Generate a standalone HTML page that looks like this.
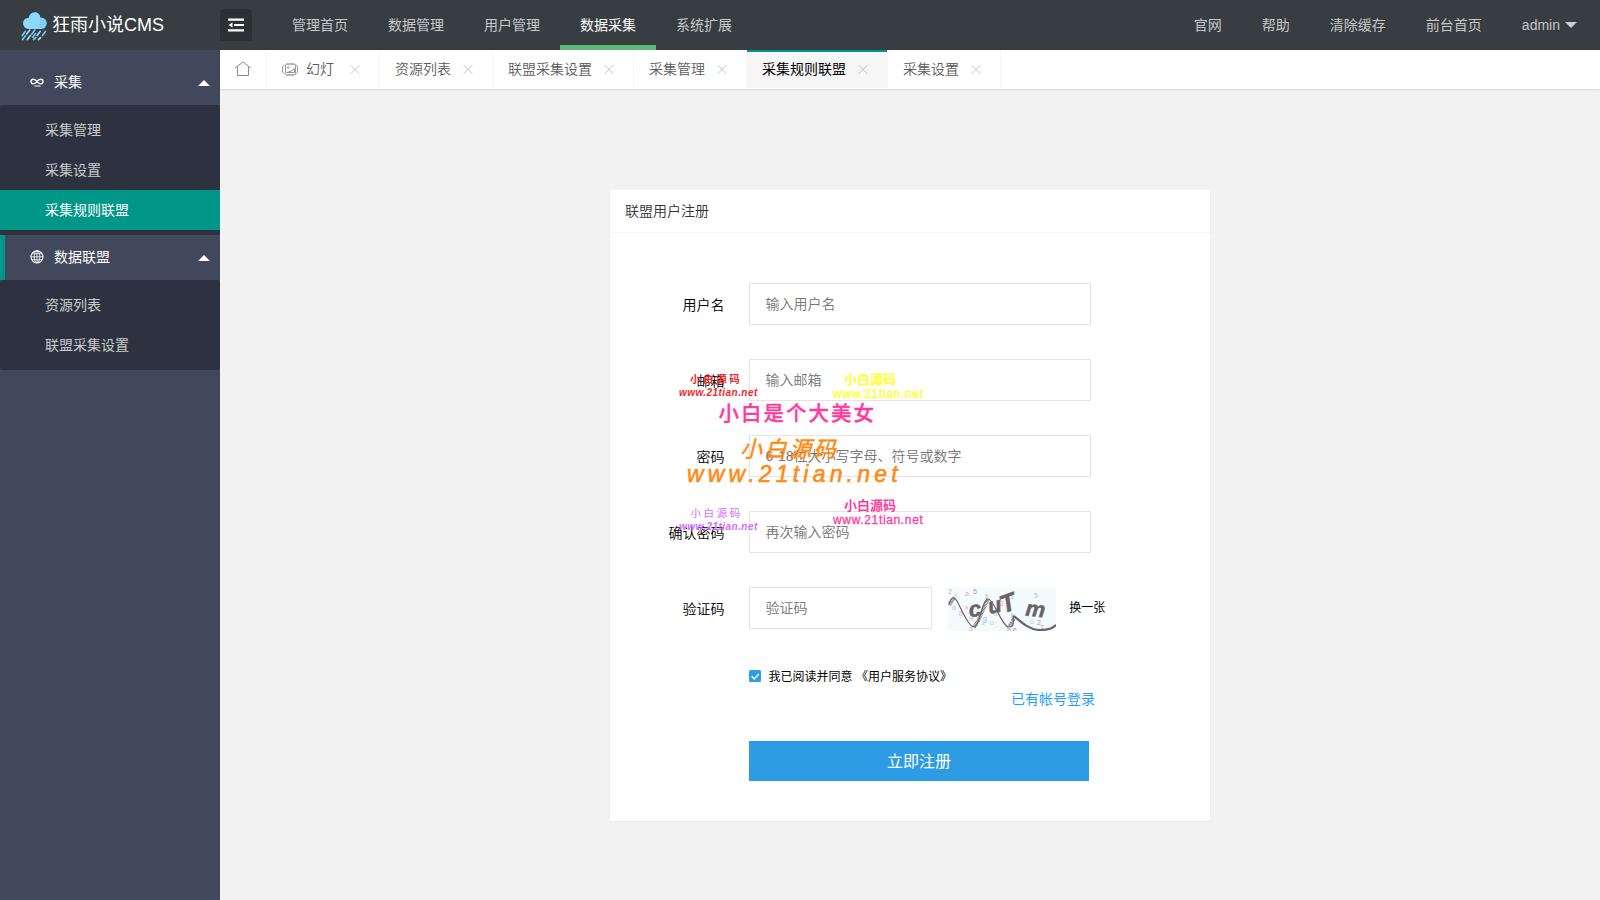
<!DOCTYPE html>
<html lang="zh-CN">
<head>
<meta charset="utf-8">
<title>狂雨小说CMS</title>
<style>
*{box-sizing:border-box;margin:0;padding:0}
html,body{width:1600px;height:900px;overflow:hidden}
body{font-family:"Liberation Sans","Noto Sans CJK SC",sans-serif;font-size:14px;color:#333;background:#f2f2f2;position:relative}
a{text-decoration:none;color:inherit}
ul{list-style:none}
/* header */
.header{position:absolute;left:0;top:0;width:1600px;height:50px;background:#373d41;z-index:10}
.logo{position:absolute;left:0;top:0;width:220px;height:50px}
.logo svg{position:absolute;left:15px;top:5px}
.logo span{position:absolute;left:52px;top:0;line-height:51px;font-size:18px;color:#fff;white-space:nowrap}
.flex{position:absolute;left:220px;top:9px;width:32px;height:32px;border-radius:3px;background:#2c3134}
.flex svg{position:absolute;left:8px;top:8px}
.nav{position:absolute;top:0;height:50px}
.nav li{float:left;height:50px;line-height:50px;padding:0 20px;color:rgba(255,255,255,.72);font-size:14px;position:relative;white-space:nowrap}
.nav li.on{color:#fff}
.nav li.on:after{content:"";position:absolute;left:0;right:0;bottom:0;height:5px;background:#5fb878}
.nav-l{left:272px}
.nav-r{right:0}
.caret{display:inline-block;width:0;height:0;border:6px solid transparent;border-top-color:rgba(255,255,255,.75);border-bottom-width:0;vertical-align:middle;margin-left:5px;margin-top:-2px}
/* side */
.side{position:absolute;left:0;top:50px;width:220px;height:850px;background:#42485b;color:#fff}
.side{padding-top:10px}
.side .t{height:45px;line-height:45px;position:relative;color:#fff;font-size:14px;padding-left:54px}
.side .t2{border-left:5px solid #009688;padding-left:49px}
.side .t svg{position:absolute}
.side .t:after{content:"";position:absolute;right:10px;top:50%;margin-top:-3px;border:6px solid transparent;border-bottom-color:#fff;border-top-width:0}
.side .sub{background:#2e3240;padding:5px 0;border-radius:2px}
.side .sub li{height:40px;line-height:40px;padding-left:45px;color:rgba(255,255,255,.75);font-size:14px}
.side .sub li.on{background:#009688;color:#fff}
/* tabs */
.tabs{position:absolute;left:220px;top:50px;width:1380px;height:39px;background:#fff;box-shadow:0 1px 2px 0 rgba(0,0,0,.1)}
.tabs li{float:left;height:38px;line-height:39px;border-right:1px solid #f6f6f6;padding:0 15px;color:#5c5c5c;font-size:14px;position:relative;white-space:nowrap}
.tabs li.home{width:47px;padding:0}
.tabs li.on{background:#f6f6f6;color:#000}
.tabs li.on:before{content:"";position:absolute;left:0;right:0;top:0;height:2px;background:#009688}
.tabs .x{display:inline-block;width:18px;height:18px;margin-left:8px;vertical-align:middle;position:relative;top:-1px}
.tabs .x svg{display:block}
/* card */
.card{position:absolute;left:610px;top:190px;width:600px;height:631px;background:#fff;border-radius:2px;box-shadow:0 1px 2px 0 rgba(0,0,0,.05)}
.card h3{height:43px;line-height:42px;padding-left:15px;font-size:14px;font-weight:normal;color:#333;border-bottom:1px solid #f6f6f6}
.lab{position:absolute;width:114.500px;text-align:right;font-size:14px;color:#000;line-height:44px;left:0}
.inp{position:absolute;left:139px;width:342px;height:42px;border:1px solid #e5e5e5;border-radius:0;background:#fff;line-height:40px;padding-left:15.500px;font-size:14px;color:#757575;white-space:nowrap}
.btn{position:absolute;left:139px;top:551px;width:340px;height:40px;background:#2e9ce5;color:#fff;font-size:16px;text-align:center;line-height:42px}
.tabs li,.card h3,.lab,.inp{font-weight:350}
.tabs li.on{font-weight:400}
.wm{position:absolute;white-space:nowrap;line-height:1;font-family:"Liberation Sans","Noto Sans CJK SC",sans-serif}
</style>
</head>
<body>
<div class="header">
  <div class="logo">
    <svg width="50" height="40" viewBox="0 0 50 40"><circle cx="19.600" cy="13.100" r="5.800" fill="#8dd8fd"/><circle cx="13.600" cy="18.300" r="5.600" fill="#8dd8fd"/><rect x="13" y="14" width="13" height="10" fill="#8dd8fd"/><circle cx="26" cy="18.300" r="5.800" fill="#78d0fc"/><path d="M19.600 7.300a5.800 5.800 0 0 1 5.700 6.800L24 24H19z" fill="#8dd8fd"/><g stroke-width="1.700" stroke-linecap="round" fill="none"><path d="M10.300 26.400l-3 4.100M19.800 25l-3 4.100M30.500 26.400l-3 4.100M10.500 30.800l-3 3.800M20.500 28.600l-2.900 3.800M20.700 32.600l-2 2.100" stroke="#6ccbf8"/><path d="M14.700 25.200l-3 3.900M25.100 26.400l-3 4.100M15.400 30.400l-3 4.100M25.500 32.600l-2 2.100" stroke="#a4dcf7"/></g></svg>
    <span>狂雨小说CMS</span>
  </div>
  <div class="flex"><svg width="16" height="16" viewBox="0 0 16 16"><path d="M0 1.5h16v2.2H0zM6 6.9h10v2.2H6zM0 12.3h16v2.2H0zM4.5 5.5v5L0.5 8z" fill="#fff"/></svg></div>
  <ul class="nav nav-l">
    <li>管理首页</li><li>数据管理</li><li>用户管理</li><li class="on">数据采集</li><li>系统扩展</li>
  </ul>
  <ul class="nav nav-r">
    <li>官网</li><li>帮助</li><li>清除缓存</li><li>前台首页</li><li style="padding-right:23px">admin<i class="caret"></i></li>
  </ul>
</div>

<div class="side">
  <div class="t"><svg style="left:30px;top:17px" width="14" height="10" viewBox="0 0 14 10"><path d="M1 4.5c0-3 4-3 6 0s6 3 6 0-4-3-6 0-6 3-6 0z" fill="none" stroke="#fff" stroke-width="1.350"/><path d="M4.500 9h6" stroke="#fff" stroke-width="1"/></svg>采集</div>
  <ul class="sub">
    <li>采集管理</li><li>采集设置</li><li class="on">采集规则联盟</li>
  </ul>
  <div class="t t2"><svg style="left:25px;top:15px" width="14" height="14" viewBox="0 0 14 14"><circle cx="7" cy="6.800" r="6" fill="none" stroke="#fff" stroke-width="1.150"/><ellipse cx="7" cy="6.800" rx="2.800" ry="6" fill="none" stroke="#fff" stroke-width=".8"/><path d="M1 6.800h12M2 3.800h10M2 9.800h10M7 .8v12" stroke="#fff" stroke-width=".8"/></svg>数据联盟</div>
  <ul class="sub">
    <li>资源列表</li><li>联盟采集设置</li>
  </ul>
</div>

<ul class="tabs">
  <li class="home"><svg style="position:absolute;left:15px;top:11px" width="16" height="16" viewBox="0 0 16 16"><path d="M0.300 6.900L8 0.900l7.700 6M2.500 6v8.500h11V6" fill="none" stroke="#8a8a8a" stroke-width="1"/></svg></li>
  <li><svg style="vertical-align:middle;margin-right:8px;position:relative;top:-1px" width="16" height="13" viewBox="0 0 16 13"><rect x="3.500" y="1" width="10" height="11" rx="1.500" fill="none" stroke="#999"/><path d="M4.500 1.100h8M4.500 11.900h8" stroke="#aaa" stroke-width="1.300"/><path d="M2.600 1.800C1 2.500.5 3.500.5 5v3c0 1.500.5 2.500 2.100 3.200M13.400 1.800c1.600.7 2.100 1.700 2.100 3.200v3c0 1.500-.5 2.500-2.100 3.200" stroke="#999" fill="none"/><circle cx="6.400" cy="4.500" r=".9" fill="none" stroke="#888" stroke-width=".8"/><path d="M4.800 9.500l4.200-1.200 3.400-2.800v4z" fill="none" stroke="#888" stroke-width=".9"/></svg>幻灯<i class="x" style="margin-left:12px"><svg width="18" height="18" viewBox="0 0 18 18"><path d="M4.500 5l9 9M13.500 5l-9 9" stroke="#c6c6c6" stroke-width="1" fill="none"/></svg></i></li>
  <li>资源列表<i class="x"><svg width="18" height="18" viewBox="0 0 18 18"><path d="M4.500 5l9 9M13.500 5l-9 9" stroke="#c6c6c6" stroke-width="1" fill="none"/></svg></i></li>
  <li>联盟采集设置<i class="x"><svg width="18" height="18" viewBox="0 0 18 18"><path d="M4.500 5l9 9M13.500 5l-9 9" stroke="#c6c6c6" stroke-width="1" fill="none"/></svg></i></li>
  <li>采集管理<i class="x"><svg width="18" height="18" viewBox="0 0 18 18"><path d="M4.500 5l9 9M13.500 5l-9 9" stroke="#c6c6c6" stroke-width="1" fill="none"/></svg></i></li>
  <li class="on">采集规则联盟<i class="x"><svg width="18" height="18" viewBox="0 0 18 18"><path d="M4.500 5l9 9M13.500 5l-9 9" stroke="#c6c6c6" stroke-width="1" fill="none"/></svg></i></li>
  <li>采集设置<i class="x"><svg width="18" height="18" viewBox="0 0 18 18"><path d="M4.500 5l9 9M13.500 5l-9 9" stroke="#c6c6c6" stroke-width="1" fill="none"/></svg></i></li>
</ul>

<div class="card">
  <h3>联盟用户注册</h3>
  <div class="lab" style="top:93px">用户名</div><div class="inp" style="top:93px">输入用户名</div>
  <div class="lab" style="top:169px">邮箱</div><div class="inp" style="top:169px">输入邮箱</div>
  <div class="lab" style="top:245px">密码</div><div class="inp" style="top:245px">6-18位大小写字母、符号或数字</div>
  <div class="lab" style="top:321px">确认密码</div><div class="inp" style="top:321px">再次输入密码</div>
  <div class="lab" style="top:397px">验证码</div><div class="inp" style="top:397px;width:183px">验证码</div>

  <svg class="cap" width="108" height="44" viewBox="0 0 108 44" style="position:absolute;left:338px;top:397px;font-family:'Liberation Sans',sans-serif">
    <rect width="108" height="44" fill="#f3fbfe"/>
    <g font-size="7" opacity=".75">
      <text x="0" y="7" fill="#a79ad8">2</text><text x="6" y="10" fill="#9fd2c8">x</text><text x="17" y="9" fill="#e0a07a">a</text><text x="25" y="7" fill="#7f6fe0">5</text>
      <text x="4" y="23" fill="#e58be0">d</text><text x="11" y="29" fill="#e58be0">b</text><text x="17" y="23" fill="#e8908c">x</text><text x="21" y="32" fill="#8fa8e8">q</text>
      <text x="35" y="34" fill="#7f9fe8">g</text><text x="33" y="39" fill="#9fd8c0">4</text><text x="42" y="38" fill="#c8c070">u</text><text x="46" y="29" fill="#8fc0e0">x</text>
      <text x="52" y="19" fill="#e89080">2</text><text x="58" y="26" fill="#c89ae8">r</text><text x="62" y="13" fill="#c8d080">4</text><text x="63" y="31" fill="#7f8fe0">k</text>
      <text x="86" y="11" fill="#9f9fe0">5</text><text x="82" y="37" fill="#9fd8c0">6</text><text x="89" y="38" fill="#8f6fe0">2</text><text x="92" y="43" fill="#e070d0">T</text>
      <text x="21" y="44" fill="#e0a07a">a</text><text x="59" y="45" fill="#8f6fe0">a e</text><text x="37" y="11" fill="#e89080">x</text><text x="50" y="14" fill="#c0a0e0">1</text>
    </g>
    <path d="M1 17C3 10 6 9 9 14S20 40 26 40 34 12 40 12 54 40 61 40 64 32 66 29" fill="none" stroke="#6b6266" stroke-width="1.200"/>
    <path d="M1 18l5.500-7.500M26 40l4-6 10-22M61 39l3-3 2.500-7" fill="none" stroke="#6f676b" stroke-width="3.600" stroke-dasharray="0.800 0.600"/>
    <path d="M66 29C74 36 82 43 92 43S104 41 108 38" fill="none" stroke="#6b6266" stroke-width="2.200"/>
    <g fill="#6b6266" stroke="#6b6266" stroke-width=".5" font-weight="bold" font-style="italic" font-size="22">
      <text transform="translate(21.500 30) rotate(-6)">c</text>
      <text transform="translate(41.500 27) rotate(-12)" font-size="22">u</text>
      <text transform="translate(55.500 26.500) rotate(-20)" font-size="25">T</text>
      <text transform="translate(77 28.500) rotate(6)">m</text>
    </g>
  </svg>
  <div style="position:absolute;left:459.300px;top:410.300px;font-size:12px;line-height:16px;color:#000">换一张</div>
  <div style="position:absolute;left:138.500px;top:479.500px;width:12.500px;height:12.500px;background:#319de4;border-radius:1.500px"><svg width="12.500" height="12.500" viewBox="0 0 12.500 12.500" style="display:block"><path d="M2.600 6.300l2.700 2.700L9.800 4" fill="none" stroke="#fff" stroke-width="1.400"/></svg></div>
  <div style="position:absolute;left:158.600px;top:479px;font-size:12px;line-height:16px;color:#000;white-space:nowrap">我已阅读并同意 《用户服务协议》</div>
  <div style="position:absolute;left:401px;top:499px;font-size:14px;line-height:20px;color:#1e9fff;white-space:nowrap">已有帐号登录</div>
  <div class="btn">立即注册</div>
</div>

<div class="wms">
  <span class="wm" style="left:690px;top:373.500px;font-size:10.500px;color:#f0282d;font-weight:bold;letter-spacing:2.600px">小白源码</span>
  <span class="wm" style="left:679px;top:388px;font-size:10px;color:#f0282d;font-weight:bold;font-style:italic;letter-spacing:.45px">www.21tian.net</span>
  <span class="wm" style="left:844px;top:373px;font-size:13px;color:#ffff33;font-weight:bold">小白源码</span>
  <span class="wm" style="left:833px;top:387.500px;font-size:12px;color:#ffff33;letter-spacing:.65px;-webkit-text-stroke:.35px #ffff33">www.21tian.net</span>
  <span class="wm" style="left:718.500px;top:404px;font-size:20.500px;color:#ff3c9e;letter-spacing:2px;font-weight:500;-webkit-text-stroke:.35px #ff3c9e">小白是个大美女</span>
  <span class="wm" style="left:740px;top:438.500px;font-size:22px;color:#ff8a14;font-style:italic;letter-spacing:2.600px;-webkit-text-stroke:.5px #ff8a14">小白源码</span>
  <span class="wm" style="left:687px;top:463px;font-size:23px;color:#ff8a14;font-style:italic;letter-spacing:4.200px;-webkit-text-stroke:.6px #ff8a14">www.21tian.net</span>
  <span class="wm" style="left:690.500px;top:508px;font-size:10.500px;color:#d56bff;letter-spacing:2.600px">小白源码</span>
  <span class="wm" style="left:679px;top:521.500px;font-size:10px;color:#d56bff;font-weight:bold;font-style:italic;letter-spacing:.45px">www.21tian.net</span>
  <span class="wm" style="left:844px;top:499px;font-size:13px;color:#ff3c9e;font-weight:bold">小白源码</span>
  <span class="wm" style="left:833px;top:514px;font-size:12px;color:#ff3c9e;letter-spacing:.65px;-webkit-text-stroke:.3px #ff3c9e">www.21tian.net</span>
</div>
</body>
</html>
